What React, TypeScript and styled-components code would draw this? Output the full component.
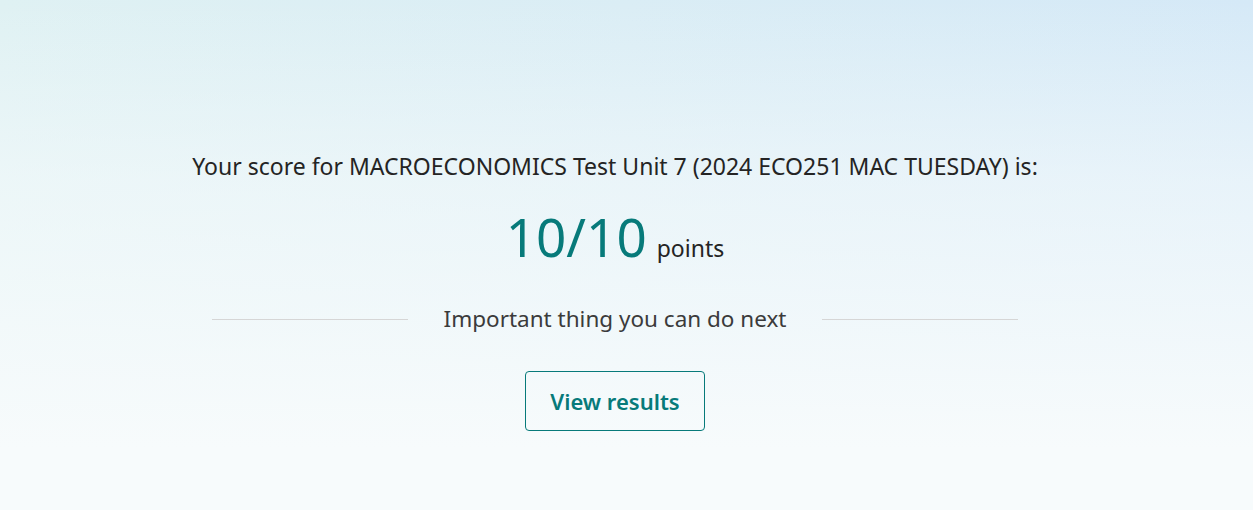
import React from "react";
import styled, { createGlobalStyle } from "styled-components";

const Global = createGlobalStyle`
  html, body { margin: 0; padding: 0; }
  body {
    font-family: "Segoe UI", "Noto Sans", "Open Sans", sans-serif;
    background: #f7fbfc;
  }
`;

const Page = styled.main`
  width: 1253px;
  height: 510px;
  box-sizing: border-box;
  background:
    linear-gradient(180deg, rgba(247, 251, 252, 0) 0%, rgba(247, 251, 252, 0.55) 35%, rgba(247, 251, 252, 1) 88%),
    linear-gradient(90deg, #dff1f3 0%, #d5e9f7 100%);
  display: flex;
  flex-direction: column;
  align-items: center;
  padding: 150px 23px 0 0;
`;

const Title = styled.h1`
  margin: 0;
  font-size: 23px;
  font-weight: 400;
  color: #242424;
  line-height: 32px;
`;

const ScoreRow = styled.div`
  display: flex;
  align-items: baseline;
  gap: 10px;
  margin-top: 23px;
`;

const Score = styled.span`
  font-size: 53px;
  line-height: 64px;
  color: #077a7a;
`;

const Unit = styled.span`
  font-size: 23px;
  color: #242424;
`;

const Divider = styled.div`
  display: flex;
  align-items: center;
  width: 806px;
  gap: 36px;
  margin-top: 34px;
`;

const Line = styled.span`
  flex: 1;
  height: 1px;
  background: #d6d6d6;
`;

const DividerText = styled.span`
  font-size: 22.5px;
  color: #3b3b3b;
  line-height: 32px;
`;

const Button = styled.button`
  margin-top: 36px;
  width: 180px;
  height: 60px;
  border: 1px solid #077a7a;
  border-radius: 4px;
  background: transparent;
  font-family: inherit;
  font-size: 22px;
  font-weight: 600;
  color: #077a7a;
  cursor: pointer;
`;

export default function App() {
  return (
    <>
      <Global />
      <Page>
        <Title>Your score for MACROECONOMICS Test Unit 7 (2024 ECO251 MAC TUESDAY) is:</Title>
        <ScoreRow>
          <Score>10/10</Score>
          <Unit>points</Unit>
        </ScoreRow>
        <Divider>
          <Line />
          <DividerText>Important thing you can do next</DividerText>
          <Line />
        </Divider>
        <Button>View results</Button>
      </Page>
    </>
  );
}
